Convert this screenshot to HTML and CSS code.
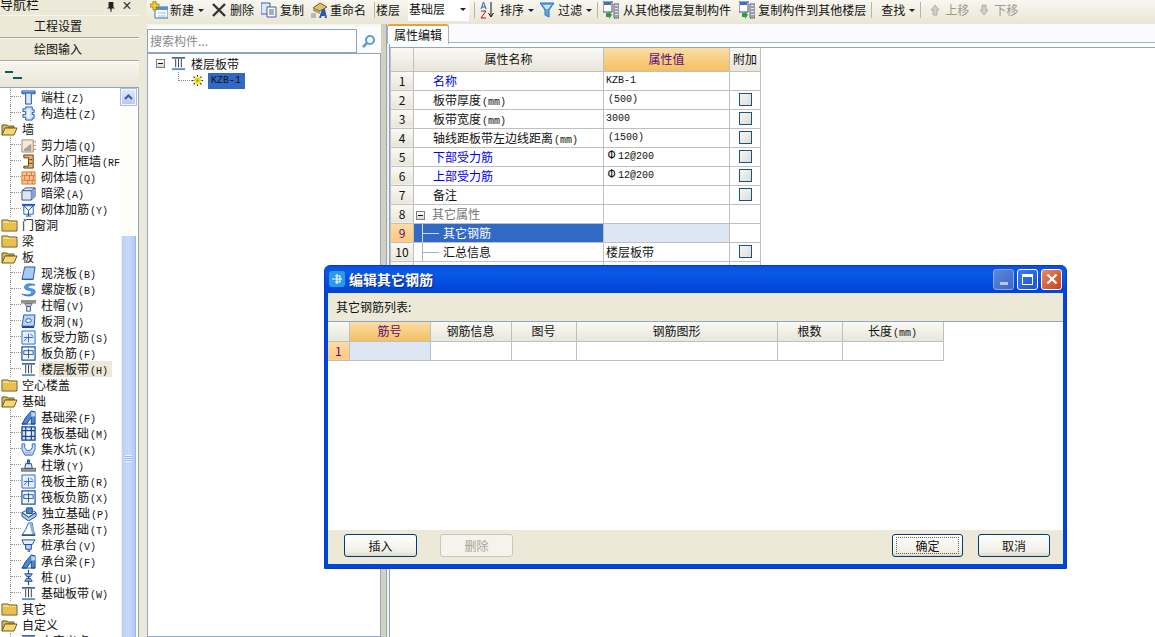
FILE: index.html
```html
<!DOCTYPE html>
<html lang="zh-CN">
<head>
<meta charset="utf-8">
<title>编辑其它钢筋</title>
<link rel="stylesheet" href="styles.css">
</head>
<body>
<svg class="sprite" xmlns="http://www.w3.org/2000/svg">
  <symbol id="fo" viewBox="0 0 17 14"><path d="M1 3h5l1 1h6v2H5L1 13z" fill="#d9b95a" stroke="#6b5a20"/><path d="M1 13l3-7h12l-3 7z" fill="#f7d772" stroke="#6b5a20"/></symbol>
  <symbol id="fc" viewBox="0 0 17 14"><path d="M1 2h6l1 1h8v10H1z" fill="#f8d878" stroke="#6b5a20"/><path d="M2 5h13v7H2z" fill="#ecc04c"/></symbol>
  <symbol id="dz" viewBox="0 0 16 16"><path d="M1 1h14v3h-4v11H5V4H1z" fill="#dfe9fa" stroke="#17478f"/><path d="M1 3h14" stroke="#3a7bd5" stroke-width="2"/></symbol>
  <symbol id="gz" viewBox="0 0 16 16"><path d="M5 1h7v3h2v3h-2v2h2v4h-2v2H5v-3H2V9h3V6H2V3h3z" fill="#cfdff8" stroke="#1e56a8"/><path d="M8 4v9" stroke="#fff" stroke-width="2"/></symbol>
  <symbol id="jl" viewBox="0 0 16 16"><path d="M1 2h12v13H1z" fill="#f3e8da" stroke="#a08a70"/><path d="M3 12l8-6v8H3z" fill="#a9a39a"/><path d="M13 4h3M13 8h3M13 12h3" stroke="#e07a20"/></symbol>
  <symbol id="rf" viewBox="0 0 16 16"><path d="M3 1h10v14H3v-2h5V4H3z" fill="#e9b070" stroke="#5c3a12"/><path d="M9 6h3M9 10h3" stroke="#5c3a12"/></symbol>
  <symbol id="qt" viewBox="0 0 16 16"><path d="M1 2h14v13H1z" fill="#f8c69a" stroke="#d9782a"/><path d="M1 6h14M1 11h14M6 2v4M11 2v4M4 6v5M9 6v5M13 6v5M7 11v4M12 11v4" stroke="#d9782a"/></symbol>
  <symbol id="al" viewBox="0 0 16 16"><path d="M1 5l4-3h10v9l-4 4H1z" fill="#dce7f5" stroke="#34507a"/><path d="M1 5h10v10M11 5l4-3" fill="none" stroke="#34507a"/><path d="M11 6l3-3v8l-3 3z" fill="#7ea3d6"/></symbol>
  <symbol id="qj" viewBox="0 0 16 16"><path d="M1 2h14v2H1z" fill="#1e56c8"/><path d="M3 4h10v9H3z" fill="#fff" stroke="#1e56c8"/><path d="M3 4l5 5 5-5M8 9v6M5 15h6" fill="none" stroke="#17478f"/></symbol>
  <symbol id="xj" viewBox="0 0 16 16"><path d="M4 1h11l-2 13H1z" fill="#a9c8f2" stroke="#1e56a8"/><path d="M1 14h12v1H1z" fill="#1e56a8"/></symbol>
  <symbol id="lx" viewBox="0 0 17 16"><path d="M16 3C10 0 3 2 4 6s8 2 8 5-6 4-11 2c3 3 14 4 15-2 1-5-9-3-8-6 1-2 5-2 8-2z" fill="#4d9ae8" stroke="#1e6ac8" stroke-width=".8"/></symbol>
  <symbol id="zm" viewBox="0 0 16 16"><path d="M0 3h16v3H0z" fill="#9a9a9a"/><path d="M0 3h16" stroke="#666"/><path d="M4 6h8l-2 3H6z" fill="#ccc" stroke="#666"/><path d="M6 9h4v5H6z" fill="#e8f0fc" stroke="#1e56a8"/></symbol>
  <symbol id="bd" viewBox="0 0 16 16"><path d="M3 1h12l-1 12H1z" fill="#bcd4f5" stroke="#1e56a8"/><ellipse cx="8" cy="7" rx="3" ry="2" fill="#fff" stroke="#1e56a8"/><path d="M1 14h13" stroke="#17478f" stroke-width="2"/></symbol>
  <symbol id="bs" viewBox="0 0 16 16"><path d="M1 1h14v14H1z" fill="#e4eefc" stroke="#2a66c0"/><path d="M8 4v9M3 8h10M10 4l3 3M3 12l3-3" stroke="#2a66c0"/></symbol>
  <symbol id="bf" viewBox="0 0 16 16"><path d="M1 1h14v14H1z" fill="#f2f6fd" stroke="#1e56a8" stroke-width="1.3"/><path d="M3 5h10v4H3zM8 3v10" fill="none" stroke="#1e56a8"/></symbol>
  <symbol id="lc" viewBox="0 0 16 16"><path d="M1 2h14" stroke="#17478f" stroke-width="1.5"/><path d="M5 3v9M8 3v9M11 3v9" stroke="#3a3a3a"/><path d="M1 13h14v2H1z" fill="#5b8fd8"/></symbol>
  <symbol id="jc" viewBox="0 0 16 16"><path d="M1 15l4-7 6-7 4 1v13H11V8L6 15z" fill="#4d86d6" stroke="#17478f"/><path d="M1 15h14" stroke="#17478f"/><path d="M11 2l4 1v4h-4z" fill="#bcd4f5"/></symbol>
  <symbol id="fb" viewBox="0 0 16 16"><path d="M1 1h14v14H1z" fill="#cfe0f8" stroke="#17478f" stroke-width="1.4"/><path d="M1 5h14M1 11h14M5 1v14M11 1v14" stroke="#17478f" stroke-width="1.3"/><path d="M6 6h4v4H6z" fill="#fff"/></symbol>
  <symbol id="js" viewBox="0 0 16 16"><path d="M1 2h3v4l2 3h4l2-3V2h3v6l-3 6H4L1 8z" fill="#c9dcf6" stroke="#2a66c0"/><path d="M4 11h8M5 13h6" stroke="#777" stroke-dasharray="1 1"/></symbol>
  <symbol id="zd" viewBox="0 0 16 16"><path d="M0 11h16v3H0z" fill="#999" stroke="#666"/><path d="M5 6h6l1 5H4z" fill="#dce7f5" stroke="#17478f"/><path d="M7 2h2v4H7z" fill="#5b8fd8" stroke="#17478f"/></symbol>
  <symbol id="dl" viewBox="0 0 17 16"><path d="M1 7l8-4 7 4-8 5z" fill="#dfe9fa" stroke="#17478f"/><path d="M1 7v4l7 5 8-5V7l-8 5z" fill="#a9c8f2" stroke="#17478f"/><path d="M6 2h6v6H6z" fill="#4d86d6" stroke="#17478f"/></symbol>
  <symbol id="tx" viewBox="0 0 16 16"><path d="M1 14l4-6 3-7h4l1 7 2 6z" fill="#fff" stroke="#2a56a0"/><path d="M9 2h3l1 6 2 6h-3z" fill="#8db2e6"/><path d="M1 14h14" stroke="#17478f" stroke-width="1.5"/></symbol>
  <symbol id="zc" viewBox="0 0 16 16"><path d="M1 2h14l-3 5H3z" fill="#e4eefc" stroke="#17478f"/><path d="M5 7h6v5H5z" fill="#bcd4f5" stroke="#17478f"/><path d="M7 12h3v3H7z" fill="#4d86d6"/></symbol>
  <symbol id="zz" viewBox="0 0 16 16"><path d="M8 0v16" stroke="#17478f" stroke-width="1.2"/><path d="M4 4h8l-2 3H6zM6 9h4l2 3H4z" fill="#8db2e6" stroke="#17478f"/></symbol>
  <symbol id="kz" viewBox="0 0 14 14"><path d="M7 0v14M0 7h14M2 2l10 10M12 2L2 12" stroke="#222" stroke-width="1.500" stroke-dasharray="2 1"/><circle cx="7" cy="7" r="4.500" fill="#f5e020"/><circle cx="7" cy="7" r="1.500" fill="#a89a10"/></symbol>
  <symbol id="nw" viewBox="0 0 18 18"><path d="M5 6h13v11H5z" fill="#fff" stroke="#3a6fb8"/><path d="M5 6h13v3H5z" fill="#5a8fd8"/><path d="M8 12h8M8 15h8" stroke="#9ab8e0"/><path d="M3 0h3v3h3v3H6v3H3V6H0V3h3z" fill="#f5d020" stroke="#8a6a10" stroke-width=".7"/></symbol>
  <symbol id="cp" viewBox="0 0 16 16"><path d="M0 1h9v11H0z" fill="#dce8f8" stroke="#39619c"/><path d="M6 5h9v10H6z" fill="#fff" stroke="#39619c"/><path d="M8 8h5M8 10h5M8 12h5" stroke="#39619c"/></symbol>
  <symbol id="rn" viewBox="0 0 18 18"><path d="M3 7l7-5 7 4-7 4z" fill="#e0c070" stroke="#7a6020"/><path d="M3 7l7 3v3l-7-3z" fill="#a8a060"/><path d="M12 8l-3 9h2l.7-2h3l.3 2h2l-2-9z" fill="#2a5ab0"/><path d="M1 12h5v5H1z" fill="#b8b8b0"/></symbol>
  <symbol id="az" viewBox="0 0 14 18"><path d="M1 8l2.500-7L6 8M2 6h3" fill="none" stroke="#2a5ab0"/><path d="M1 10h5l-5 7h5" fill="none" stroke="#a02020"/><path d="M11 1v14M8.500 12l2.500 4 2.500-4" fill="none" stroke="#111"/></symbol>
  <symbol id="ft" viewBox="0 0 14 16"><path d="M0 1h14L9 8v7l-4-2V8z" fill="#5ba8e8" stroke="#2a70b8"/><path d="M3 3h8L8 7H6z" fill="#cfe8fb"/></symbol>
  <symbol id="lf" viewBox="0 0 16 18"><path d="M0 0h9v11H0z" fill="#fff" stroke="#446"/><path d="M1 1h7v3H1z" fill="#3a6fd0"/><path d="M3 12h3v-2l3 4-3 4v-2H3z" fill="#28a040"/><path d="M11 3h5v14h-5z" fill="#dfe5ee" stroke="#556"/><path d="M12 6h3M12 9h3M12 12h3M12 15h3" stroke="#556"/></symbol>
  <symbol id="up" viewBox="0 0 12 12"><path d="M6 1l4 5H8v5H4V6H2z" fill="#cfcfc4" stroke="#b0b0a6"/></symbol>
  <symbol id="dn" viewBox="0 0 12 12"><path d="M6 11l4-5H8V1H4v5H2z" fill="#cfcfc4" stroke="#b0b0a6"/></symbol>
  <symbol id="app" viewBox="0 0 16 16"><rect width="16" height="16" rx="3" fill="#2a9ae8"/><path d="M8 3v10M3 8h10M6 5h5v6H6" fill="none" stroke="#fff" stroke-width="1.100"/></symbol>
</svg>

<div class="app">
  <aside class="nav">
    <div class="nav-title"><span class="nav-title-text">导航栏</span><span class="pin"></span><span class="nav-x">×</span></div>
    <div class="nav-btn">工程设置</div>
    <div class="nav-btn">绘图输入</div>
    <div class="nav-tool"><svg class="tool-ic" viewBox="0 0 17 10"><path d="M0 2h8M8 8h9" stroke="#0c5a5a" stroke-width="2"/></svg></div>
    <div class="nav-body">
      <div class="tree">
        <div class="trow"><i class="conn"></i><svg class="ic"><use href="#dz"/></svg><span class="tl">端柱<b>(Z)</b></span></div>
        <div class="trow"><i class="conn"></i><svg class="ic"><use href="#gz"/></svg><span class="tl">构造柱<b>(Z)</b></span></div>
        <div class="trow"><svg class="fold"><use href="#fo"/></svg><span class="fl">墙</span></div>
        <div class="trow"><i class="conn"></i><svg class="ic"><use href="#jl"/></svg><span class="tl">剪力墙<b>(Q)</b></span></div>
        <div class="trow"><i class="conn"></i><svg class="ic"><use href="#rf"/></svg><span class="tl">人防门框墙<b>(RF</b></span></div>
        <div class="trow"><i class="conn"></i><svg class="ic"><use href="#qt"/></svg><span class="tl">砌体墙<b>(Q)</b></span></div>
        <div class="trow"><i class="conn"></i><svg class="ic"><use href="#al"/></svg><span class="tl">暗梁<b>(A)</b></span></div>
        <div class="trow"><i class="conn"></i><svg class="ic"><use href="#qj"/></svg><span class="tl">砌体加筋<b>(Y)</b></span></div>
        <div class="trow"><svg class="fold"><use href="#fc"/></svg><span class="fl">门窗洞</span></div>
        <div class="trow"><svg class="fold"><use href="#fc"/></svg><span class="fl">梁</span></div>
        <div class="trow"><svg class="fold"><use href="#fo"/></svg><span class="fl">板</span></div>
        <div class="trow"><i class="conn"></i><svg class="ic"><use href="#xj"/></svg><span class="tl">现浇板<b>(B)</b></span></div>
        <div class="trow"><i class="conn"></i><svg class="ic"><use href="#lx"/></svg><span class="tl">螺旋板<b>(B)</b></span></div>
        <div class="trow"><i class="conn"></i><svg class="ic"><use href="#zm"/></svg><span class="tl">柱帽<b>(V)</b></span></div>
        <div class="trow"><i class="conn"></i><svg class="ic"><use href="#bd"/></svg><span class="tl">板洞<b>(N)</b></span></div>
        <div class="trow"><i class="conn"></i><svg class="ic"><use href="#bs"/></svg><span class="tl">板受力筋<b>(S)</b></span></div>
        <div class="trow"><i class="conn"></i><svg class="ic"><use href="#bf"/></svg><span class="tl">板负筋<b>(F)</b></span></div>
        <div class="trow"><i class="conn"></i><svg class="ic"><use href="#lc"/></svg><span class="tl sel">楼层板带<b>(H)</b></span></div>
        <div class="trow"><svg class="fold"><use href="#fc"/></svg><span class="fl">空心楼盖</span></div>
        <div class="trow"><svg class="fold"><use href="#fo"/></svg><span class="fl">基础</span></div>
        <div class="trow"><i class="conn"></i><svg class="ic"><use href="#jc"/></svg><span class="tl">基础梁<b>(F)</b></span></div>
        <div class="trow"><i class="conn"></i><svg class="ic"><use href="#fb"/></svg><span class="tl">筏板基础<b>(M)</b></span></div>
        <div class="trow"><i class="conn"></i><svg class="ic"><use href="#js"/></svg><span class="tl">集水坑<b>(K)</b></span></div>
        <div class="trow"><i class="conn"></i><svg class="ic"><use href="#zd"/></svg><span class="tl">柱墩<b>(Y)</b></span></div>
        <div class="trow"><i class="conn"></i><svg class="ic"><use href="#bs"/></svg><span class="tl">筏板主筋<b>(R)</b></span></div>
        <div class="trow"><i class="conn"></i><svg class="ic"><use href="#bf"/></svg><span class="tl">筏板负筋<b>(X)</b></span></div>
        <div class="trow"><i class="conn"></i><svg class="ic wide"><use href="#dl"/></svg><span class="tl">独立基础<b>(P)</b></span></div>
        <div class="trow"><i class="conn"></i><svg class="ic"><use href="#tx"/></svg><span class="tl">条形基础<b>(T)</b></span></div>
        <div class="trow"><i class="conn"></i><svg class="ic"><use href="#zc"/></svg><span class="tl">桩承台<b>(V)</b></span></div>
        <div class="trow"><i class="conn"></i><svg class="ic"><use href="#jc"/></svg><span class="tl">承台梁<b>(F)</b></span></div>
        <div class="trow"><i class="conn"></i><svg class="ic"><use href="#zz"/></svg><span class="tl">桩<b>(U)</b></span></div>
        <div class="trow"><i class="conn"></i><svg class="ic"><use href="#lc"/></svg><span class="tl">基础板带<b>(W)</b></span></div>
        <div class="trow"><svg class="fold"><use href="#fc"/></svg><span class="fl">其它</span></div>
        <div class="trow"><svg class="fold"><use href="#fo"/></svg><span class="fl">自定义</span></div>
        <div class="trow"><i class="conn"></i><svg class="ic"><use href="#lc"/></svg><span class="tl">自定义点</span></div>
      </div>
      <div class="vscroll">
        <div class="vs-up"><svg viewBox="0 0 9 6" class="vs-arrow"><path d="M1 5l3.500-3.500L8 5" fill="none" stroke="#3a5a9a" stroke-width="2"/></svg></div>
        <div class="vs-thumb"><span class="grip"></span></div>
      </div>
    </div>
  </aside>
  <div class="gutter"></div>

  <main class="main">
    <div class="toolbar">
      <div class="tb"><svg class="t18"><use href="#nw"/></svg><span>新建</span><i class="caret"></i></div>
      <div class="tb g8"><svg class="t-x" viewBox="0 0 14 14"><path d="M1 1l12 12M13 1L1 13" stroke="#333" stroke-width="2.400"/></svg><span class="ml1">删除</span></div>
      <div class="tb g7"><svg class="t16"><use href="#cp"/></svg><span class="ml2">复制</span></div>
      <div class="tb g6"><svg class="t18"><use href="#rn"/></svg><span>重命名</span></div>
      <i class="sep g8"></i>
      <div class="tb g1"><span>楼层</span></div>
      <div class="floor-select g8"><span>基础层</span><i class="caret"></i></div>
      <i class="sep g5"></i>
      <div class="tb g5"><svg class="t-az"><use href="#az"/></svg><span class="ml3">排序</span><i class="caret"></i></div>
      <div class="tb g6"><svg class="t-ft"><use href="#ft"/></svg><span class="ml1">过滤</span><i class="caret"></i></div>
      <i class="sep g5"></i>
      <div class="tb g5"><svg class="t16"><use href="#lf"/></svg><span class="ml1">从其他楼层复制构件</span></div>
      <div class="tb g8"><svg class="t16"><use href="#lf"/></svg><span class="ml2">复制构件到其他楼层</span></div>
      <i class="sep g5"></i>
      <div class="tb g9"><span>查找</span><i class="caret"></i></div>
      <i class="sep g5"></i>
      <div class="tb g6 off"><svg class="t-ud"><use href="#up"/></svg><span class="ml1">上移</span></div>
      <div class="tb g7 off"><svg class="t-ud"><use href="#dn"/></svg><span class="ml1">下移</span></div>
    </div>
    <div class="panes">
      <section class="list-pane">
        <div class="search">
          <div class="search-box">搜索构件...</div>
          <div class="search-btn"><svg viewBox="0 0 14 14" class="t-mag"><circle cx="8" cy="6" r="4" fill="#fff" stroke="#5a9ad0" stroke-width="2"/><path d="M5 9l-4 4" stroke="#5a9ad0" stroke-width="2.500"/></svg></div>
        </div>
        <div class="list-tree">
          <div class="lrow"><span class="expander"><i></i></span><svg class="lc-ic"><use href="#lc"/></svg><span class="lname">楼层板带</span></div>
          <div class="lrow lchild"><i class="lconn"></i><svg class="kz-ic"><use href="#kz"/></svg><span class="lsel">KZB-1</span></div>
        </div>
      </section>
      <div class="splitter"></div>
      <section class="prop-pane">
        <div class="tab-strip"><div class="tab">属性编辑</div></div>
        <div class="tab-body">
          <table class="grid prop">
            <colgroup><col class="pc0"><col class="pc1"><col class="pc2"><col class="pc3"></colgroup>
            <tr class="hd"><th></th><th>属性名称</th><th class="cur">属性值</th><th>附加</th></tr>
            <tr><th>1</th><td class="nm link">名称</td><td class="val lat">KZB-1</td><td></td></tr>
            <tr><th>2</th><td class="nm">板带厚度<b>(mm)</b></td><td class="val lat ind">(500)</td><td><i class="chk"></i></td></tr>
            <tr><th>3</th><td class="nm">板带宽度<b>(mm)</b></td><td class="val lat">3000</td><td><i class="chk"></i></td></tr>
            <tr><th>4</th><td class="nm">轴线距板带左边线距离<b>(mm)</b></td><td class="val lat ind">(1500)</td><td><i class="chk"></i></td></tr>
            <tr><th>5</th><td class="nm link">下部受力筋</td><td class="val lat ind"><em>Φ</em>12@200</td><td><i class="chk"></i></td></tr>
            <tr><th>6</th><td class="nm link">上部受力筋</td><td class="val lat ind"><em>Φ</em>12@200</td><td><i class="chk"></i></td></tr>
            <tr><th>7</th><td class="nm">备注</td><td></td><td><i class="chk"></i></td></tr>
            <tr><th>8</th><td class="group"><span class="expander inline"><i></i></span>其它属性</td><td></td><td></td></tr>
            <tr class="selrow"><th>9</th><td class="child"><i class="gline"></i>其它钢筋</td><td class="selval"></td><td></td></tr>
            <tr><th>10</th><td class="child"><i class="gline"></i>汇总信息</td><td class="val">楼层板带</td><td><i class="chk"></i></td></tr>
            <tr><th></th><td></td><td></td><td></td></tr>
          </table>
        </div>
      </section>
    </div>
  </main>
</div>

<div class="dialog">
  <div class="dlg-title">
    <svg class="dlg-ic"><use href="#app"/></svg>
    <span class="dlg-name">编辑其它钢筋</span>
    <div class="dlg-ctrls">
      <span class="wb wb-min"><i></i></span>
      <span class="wb wb-max"><i></i></span>
      <span class="wb wb-close"><svg viewBox="0 0 12 12" class="x-ic"><path d="M1.500 1.500l9 9M10.500 1.500l-9 9" stroke="#fff" stroke-width="2.200"/></svg></span>
    </div>
  </div>
  <div class="dlg-body">
    <div class="dlg-label">其它钢筋列表:</div>
    <div class="dlg-table">
      <table class="grid rebar">
        <colgroup><col class="rc0"><col class="rc1"><col class="rc2"><col class="rc3"><col class="rc4"><col class="rc5"><col class="rc6"></colgroup>
        <tr class="hd"><th></th><th class="cur">筋号</th><th>钢筋信息</th><th>图号</th><th>钢筋图形</th><th>根数</th><th>长度<b>(mm)</b></th></tr>
        <tr><th class="curidx">1</th><td class="selval"></td><td></td><td></td><td></td><td></td><td></td></tr>
      </table>
    </div>
    <div class="dlg-foot">
      <span class="btn">插入</span>
      <span class="btn disabled">删除</span>
      <span class="btn default"><span class="focus">确定</span></span>
      <span class="btn">取消</span>
    </div>
  </div>
</div>
</body>
</html>
```

FILE: styles.css
```css
* { box-sizing: border-box; }
html, body { margin: 0; padding: 0; width: 1155px; height: 637px; overflow: hidden; }
body { background: #fff; position: relative; font: 12px/16px "Noto Sans CJK SC", "Liberation Sans", sans-serif; color: #111; }
.sprite { position: absolute; width: 0; height: 0; }
i, em { font-style: normal; }
b { font: 400 10px/10px "Liberation Mono", monospace; margin-left: 1px; }
.lat { font-family: "Liberation Mono", monospace; font-size: 10px; }

.app { display: flex; height: 637px; }

/* navigation */
.nav { width: 139px; flex: none; display: flex; flex-direction: column; background: #ece9d8; }
.nav-title { height: 15px; display: flex; align-items: flex-start; overflow: hidden; }
.nav-title-text { font-size: 13px; line-height: 14px; margin-top: -3px; flex: 1; }
.pin { width: 8px; height: 10px; margin-top: 2px; background: #222; clip-path: polygon(20% 0, 80% 0, 80% 50%, 100% 65%, 60% 65%, 55% 100%, 45% 100%, 40% 65%, 0 65%, 20% 50%); }
.nav-x { width: 24px; text-align: center; font: 16px/12px "Liberation Sans", sans-serif; color: #333; }
.nav-btn { height: 23px; line-height: 19px; text-align: center; padding-right: 23px; font-size: 12px; background: #ece9d8; border-top: 1px solid #f8f6ec; border-bottom: 1px solid #aca899; }
.nav-tool { height: 26px; flex: none; background: linear-gradient(#f7f5ee, #e9e5d6); border-top: 1px solid #fff; padding: 8px 0 0 5px; }
.tool-ic { width: 17px; height: 10px; display: block; }
.nav-body { flex: 1; min-height: 0; display: flex; background: #fff; border: 1px solid #8ea6c4; border-left: 0; border-bottom: 0; overflow: hidden; }
.tree { flex: 1; min-width: 0; overflow: hidden; padding-top: 1px; }
.trow { height: 16px; display: flex; align-items: center; white-space: nowrap; overflow: hidden; }
.conn { width: 11px; margin-left: 10px; height: 16px; flex: none; border-left: 1px dotted #999; position: relative; }
.conn::after { content: ""; position: absolute; left: 0; right: 0; top: 7px; border-top: 1px dotted #999; }
.ic { width: 15px; height: 15px; flex: none; }
.ic.wide { width: 16px; }
.fold { width: 17px; height: 14px; flex: none; margin-left: 1px; }
.fl { margin-left: 4px; line-height: 16px; }
.tl { margin-left: 3px; padding: 0 2px; line-height: 16px; }
.tl.sel { background: #ece9d8; width: 73px; flex: none; }
.vscroll { width: 17px; flex: none; margin-right: 1px; background: #fcfcf8; overflow: hidden; display: flex; flex-direction: column; align-items: center; padding-top: 1px; }
.vs-up { width: 15px; height: 16px; flex: none; background: linear-gradient(#dfe8fd, #b6caf6); border: 1px solid #f2f5fe; outline: 1px solid #a9bde8; display: flex; align-items: center; justify-content: center; }
.vs-arrow { width: 9px; height: 6px; }
.vs-thumb { width: 15px; height: 444px; flex: none; margin-top: 131px; background: linear-gradient(90deg, #bdd0f8, #c9d8fb 50%, #b5c9f6); border-left: 1px solid #eef2fe; border-right: 1px solid #9db4e6; display: flex; align-items: center; justify-content: center; }
.grip { width: 7px; height: 7px; background: repeating-linear-gradient(#f4f7ff 0 1px, #9db4e6 1px 2px); }
.gutter { width: 8px; flex: none; background: #ece9d8; }

/* main */
.main { flex: 1; min-width: 0; display: flex; flex-direction: column; }
.toolbar { height: 24px; flex: none; display: flex; align-items: center; padding: 0 0 4px 3px; background: linear-gradient(#f8f7f0, #e9e6d6); white-space: nowrap; }
.tb { display: flex; align-items: center; flex: none; }
.tb.off { color: #9a9a90; }
.g1 { margin-left: 1px; } .g5 { margin-left: 5px; } .g6 { margin-left: 6px; } .g7 { margin-left: 7px; } .g8 { margin-left: 8px; } .g9 { margin-left: 9px; }
.ml1 { margin-left: 4px; } .ml2 { margin-left: 3px; } .ml3 { margin-left: 6px; }
.t18 { width: 18px; height: 18px; margin-right: 2px; }
.t16 { width: 16px; height: 18px; margin-right: 0; }
.t-x { width: 14px; height: 14px; }
.t-az { width: 14px; height: 18px; }
.t-ft { width: 14px; height: 16px; }
.t-ud { width: 12px; height: 12px; margin-left: 2px; }
.caret { width: 0; height: 0; margin-left: 4px; border: 3px solid transparent; border-top: 3px solid #222; border-bottom: 0; }
.sep { width: 1px; height: 16px; flex: none; background: #b8b5a4; }
.floor-select { width: 61px; height: 21px; flex: none; background: #fff; display: flex; align-items: center; justify-content: space-between; padding: 0 3px 2px 1px; }
.panes { flex: 1; min-height: 0; display: flex; background: #fff; }
.list-pane { width: 234px; flex: none; display: flex; flex-direction: column; background: #fff; }
.search { height: 29px; flex: none; display: flex; padding-top: 5px; background: linear-gradient(#f4f3ea 0, #fbfbfd 4px); }
.search-box { width: 210px; height: 24px; border: 1px solid #8ea6c4; background: #fff; color: #8a8a8a; font-size: 12px; line-height: 21px; padding-left: 2px; }
.search-btn { flex: 1; display: flex; align-items: center; justify-content: center; }
.t-mag { width: 14px; height: 14px; }
.list-tree { flex: 1; border: 1px solid #8ea6c4; }
.lrow { height: 17px; display: flex; align-items: center; padding-left: 8px; margin-top: 1px; }
.expander { width: 9px; height: 9px; flex: none; border: 1px solid #808080; background: linear-gradient(#fff, #d8d8d0); position: relative; }
.expander i { position: absolute; left: 1px; right: 1px; top: 3px; height: 1px; background: #111; }
.lc-ic { width: 15px; height: 15px; margin-left: 6px; flex: none; }
.lname { margin-left: 5px; }
.lchild { height: 17px; padding-left: 30px; margin-top: 0; }
.lconn { width: 14px; height: 9px; flex: none; margin-top: -9px; border-left: 1px dotted #888; border-bottom: 1px dotted #888; }
.kz-ic { width: 11px; height: 11px; flex: none; }
.lsel { margin-left: 5px; width: 37px; height: 16px; background: #316ac5; color: #111; font: 10px/16px "Liberation Mono", monospace; padding-left: 3px; }
.splitter { width: 9px; flex: none; background: linear-gradient(90deg, #d4d0be 0 5px, #8ea6c4 5px 6px, #f2f1e8 6px); }
.prop-pane { flex: 1; min-width: 0; display: flex; flex-direction: column; border-left: 1px solid #8ea6c4; margin-left: -1px; }
.tab-strip { height: 19px; flex: none; background: #fbfbff; border-bottom: 1px solid #a8b0bc; margin-left: -3px; position: relative; }
.tab { width: 62px; height: 20px; background: #fff; border: 1px solid #a8b0bc; border-bottom: 0; border-top: 2px solid #f0a030; border-radius: 3px 3px 0 0; text-align: center; line-height: 17px; }
.tab-body { flex: 1; background: #fff; margin-top: 4px; border-top: 1px solid #8ea6c4; }

/* grids */
.grid { border-collapse: collapse; table-layout: fixed; }
.grid th, .grid td { border: 1px solid #c0c0c0; padding: 0; font-weight: 400; white-space: nowrap; overflow: hidden; position: relative; font-size: 12px; line-height: 16px; }
.grid tr.hd th { border-top: 0; }
.grid td.lat { font-size: 10px; font-family: "Liberation Mono", monospace; }
.grid th { background: linear-gradient(#faf9f4, #e8e5d9); text-align: center; }
.grid tr.hd th.cur { background: linear-gradient(#fbdea6, #f4bf60); color: #5a0a7a; }
.prop { width: 370px; }
.prop tr { height: 19px; }
.prop tr.hd { height: 23px; }
.pc0 { width: 23px; } .pc1 { width: 190px; } .pc2 { width: 126px; } .pc3 { width: 31px; }
.nm { padding-left: 19px !important; }
.link { color: #0000f0; }
.val { padding-left: 2px !important; }
.val.ind { padding-left: 4px !important; }
.ind em { display: inline-block; width: 10px; font-size: 12px; line-height: 10px; }
.chk { display: block; margin: 0 auto; width: 13px; height: 13px; border: 1px solid #1c5180; background: linear-gradient(135deg, #f8f8f4, #dcdcd4); }
.group { color: #777; padding-left: 2px !important; }
.expander.inline { display: inline-block; vertical-align: -1px; margin-right: 7px; }
.child { padding-left: 29px !important; }
.gline { position: absolute; left: 8px; top: 0; bottom: 0; width: 17px; border-left: 1px solid #b0b0b0; }
.gline::after { content: ""; position: absolute; left: 0; right: 0; top: 9px; border-top: 1px solid #b0b0b0; }
.selrow th { background: linear-gradient(#fddca4, #fbc880); color: #5a0a7a; }
.selrow .child { background: #316ac5; color: #fff; }
.selrow .gline, .selrow .gline::after { border-color: #cfdcf2; }
.selval { background: #dde7f3; }

/* dialog */
.dialog { position: absolute; left: 324px; top: 265px; width: 743px; height: 304px; background: linear-gradient(#0a50d8, #0a5ae8 6px, #0046d8 24px); border-radius: 6px 6px 0 0; border: 1px solid #0a3ac0; display: flex; flex-direction: column; }
.dlg-title { height: 27px; flex: none; display: flex; align-items: center; padding: 0 0 1px 4px; }
.dlg-ic { width: 16px; height: 16px; flex: none; }
.dlg-name { margin-left: 4px; color: #fff; font-size: 14px; font-weight: 700; line-height: 18px; text-shadow: 1px 1px 0 #0a2a80; }
.dlg-ctrls { margin-left: auto; display: flex; gap: 3px; padding-right: 4px; }
.wb { width: 21px; height: 21px; border: 1px solid #fff; border-radius: 3px; display: flex; align-items: center; justify-content: center; background: linear-gradient(135deg, #3f7cf0, #1c50d0); }
.wb-min { background: linear-gradient(135deg, #5c88dc, #3d66c8); border-color: #8aa8e4; }
.wb-min i { width: 8px; height: 3px; margin-top: 8px; background: #b8c8ee; }
.wb-max i { width: 11px; height: 11px; border: 1px solid #fff; border-top-width: 3px; }
.wb-close { background: linear-gradient(135deg, #e88a68, #c8401c); }
.x-ic { width: 12px; height: 12px; }
.dlg-body { flex: 1; min-height: 0; margin: 0 3px 4px; background: #ece9d8; display: flex; flex-direction: column; }
.dlg-label { height: 28px; flex: none; line-height: 28px; padding-left: 8px; }
.dlg-table { flex: 1; min-height: 0; background: #fff; border-top: 1px solid #8ea6c4; }
.rebar { width: 615px; }
.rebar tr { height: 19px; }
.rebar th:first-child { border-left: 0; }
.rc0 { width: 21px; } .rc1 { width: 81px; } .rc2 { width: 81px; } .rc3 { width: 65px; } .rc4 { width: 201px; } .rc5 { width: 65px; } .rc6 { width: 101px; }
.curidx { background: linear-gradient(#fddca4, #fbc880) !important; color: #5a0a7a; }
.dlg-foot { height: 34px; flex: none; display: flex; align-items: center; padding: 0 0 3px 16px; }
.btn { width: 73px; height: 23px; flex: none; display: flex; align-items: center; justify-content: center; border: 1px solid #003c74; border-radius: 3px; background: linear-gradient(#fff, #f0efe6 80%, #dcd8c8); line-height: 16px; }
.btn.disabled { margin-left: 23px; border-color: #c9c7ba; background: #f4f3ec; color: #a5a498; }
.btn.default { margin-left: auto; width: 71px; }
.focus { width: 63px; height: 17px; border: 1px dotted #8a5a30; text-align: center; line-height: 15px; }
.btn:last-child { width: 72px; margin: 0 13px 0 15px; }
```
